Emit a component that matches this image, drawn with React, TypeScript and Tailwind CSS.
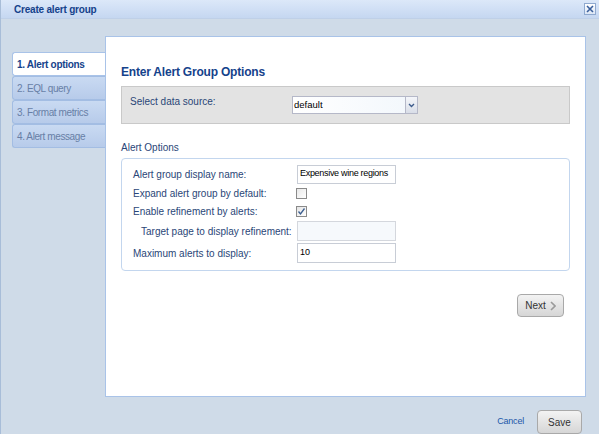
import React from "react";

const font = { fontFamily: '"Liberation Sans", Arial, sans-serif' };

function Tab({ label, active }: { label: string; active?: boolean }) {
  return active ? (
    <div className="h-[24px] bg-white border border-r-0 border-[#a9c3e8] rounded-l-[3px] flex items-center pl-[4px] text-[10px] tracking-[-0.3px] font-bold text-[#15428b]">
      {label}
    </div>
  ) : (
    <div className="h-[24px] bg-gradient-to-b from-[#c9daf2] to-[#b7cbea] border border-r-0 border-[#a3bde3] rounded-l-[3px] flex items-center pl-[4px] text-[10px] tracking-[-0.4px] text-[#687fa6] -mt-px">
      {label}
    </div>
  );
}

function Row({ label, children, indent, h, mt }: { label: string; children: React.ReactNode; indent?: boolean; h: string; mt?: string }) {
  return (
    <div className={`flex items-center ${h} ${mt ?? ""}`}>
      <div className={`w-[175px] text-[10px] whitespace-nowrap text-[#2a4677] ${indent ? "pl-[19px]" : "pl-[11px]"}`}>{label}</div>
      {children}
    </div>
  );
}

export default function App() {
  return (
    <div className="w-[599px] h-[434px] bg-[#cfdbe8] flex flex-col overflow-hidden border-l border-[#a8bdd8]" style={font}>
      <div className="h-[20px] bg-gradient-to-b from-[#dce8f9] to-[#c5d7f1] flex items-center justify-between pl-[13px] pr-[3px] border-b border-[#bfd0e8]">
        <span className="text-[10px] tracking-[-0.2px] font-bold text-[#15428b]">Create alert group</span>
        <div className="w-[12px] h-[12px] border border-[#8fa9cf] bg-gradient-to-b from-white to-[#dbe6f5] flex items-center justify-center">
          <svg width="8" height="8" viewBox="0 0 8 8">
            <path d="M1 1 L7 7 M7 1 L1 7" stroke="#3a5f9c" strokeWidth="1.6" />
          </svg>
        </div>
      </div>
      <div className="flex pt-[17px]">
        <div className="w-[104px] pl-[11px] pt-[16px] flex flex-col">
          <Tab label="1. Alert options" active />
          <div className="h-px" />
          <Tab label="2. EQL query" />
          <div className="h-px" />
          <Tab label="3. Format metrics" />
          <div className="h-px" />
          <Tab label="4. Alert message" />
        </div>
        <div className="w-[481px] h-[361px] bg-white border border-[#a9c3e8] pl-[15px] pr-[15px] flex flex-col">
          <div className="mt-[27px] text-[12px] tracking-[-0.2px] font-bold text-[#15428b] leading-[16px]">Enter Alert Group Options</div>
          <div className="mt-[6px] h-[38px] bg-[#e3e3e3] border border-[#c9c9c9] flex items-center">
            <span className="pl-[8px] w-[170px] text-[10px] text-[#2a4677] -mt-[8px]">Select data source:</span>
            <div className="h-[18px] w-[126px] border border-[#b5b8c8] bg-gradient-to-r from-white to-[#f2f7fc] flex items-center">
              <span className="flex-1 pl-[1px] text-[9.5px] text-black">default</span>
              <div className="w-[12px] h-full border-l border-[#b5b8c8] bg-gradient-to-b from-[#f4f6fa] to-[#d9dee8] flex items-center justify-center">
                <svg width="7" height="5" viewBox="0 0 7 5">
                  <path d="M1 1 L3.5 3.5 L6 1" stroke="#3d5c8c" strokeWidth="1.4" fill="none" />
                </svg>
              </div>
            </div>
          </div>
          <div className="mt-[17px] text-[10px] text-[#2a4677] leading-[13px]">Alert Options</div>
          <div className="mt-[4px] h-[113px] border border-[#c3d6ee] rounded-[4px] flex flex-col pt-[5px]">
            <Row label="Alert group display name:" h="h-[20px]">
              <div className="h-[19px] w-[99px] border border-[#c8cdd6] bg-white flex items-center pl-[2px] text-[9px] tracking-[-0.3px] text-black whitespace-nowrap overflow-hidden">
                Expensive wine regions
              </div>
            </Row>
            <Row label="Expand alert group by default:" h="h-[19px]">
              <div className="w-[11px] h-[11px] border border-[#8a8a8a] bg-gradient-to-br from-[#e8e8e8] to-white -ml-[1px]" />
            </Row>
            <Row label="Enable refinement by alerts:" h="h-[17px]">
              <div className="w-[11px] h-[11px] border border-[#8a8a8a] bg-gradient-to-br from-[#e4e4e4] to-white -ml-[1px] flex items-center justify-center">
                <svg width="9" height="9" viewBox="0 0 9 9">
                  <path d="M1.5 4.5 L3.5 7 L7.5 1.5" stroke="#3b5e90" strokeWidth="1.3" fill="none" />
                </svg>
              </div>
            </Row>
            <Row label="Target page to display refinement:" indent h="h-[20px]" mt="mt-[1px]">
              <div className="h-[20px] w-[99px] border border-[#d4d7dd] bg-[#f6f9fc]" />
            </Row>
            <Row label="Maximum alerts to display:" h="h-[20px]" mt="mt-[2px]">
              <div className="h-[20px] w-[99px] border border-[#c8cdd6] bg-white flex items-center pl-[2px] text-[9px] text-black">10</div>
            </Row>
          </div>
          <div className="mt-[23px] flex justify-end pr-[6px]">
            <div className="h-[23px] w-[47px] rounded-[4px] border border-[#a9a9a9] bg-gradient-to-b from-[#f3f3f3] to-[#d6d6d6] flex items-center justify-center gap-[4px]">
              <span className="text-[10px] text-[#333]">Next</span>
              <svg width="6" height="10" viewBox="0 0 6 10">
                <path d="M1 1 L5 5 L1 9" stroke="#9a9a9a" strokeWidth="1.6" fill="none" />
              </svg>
            </div>
          </div>
        </div>
      </div>
      <div className="flex items-center justify-end pr-[17px] pt-[13px]">
        <span className="text-[9px] tracking-[-0.2px] text-[#2057a8] mr-[13px]">Cancel</span>
        <div className="h-[24px] w-[45px] rounded-[4px] border border-[#a9a9a9] bg-gradient-to-b from-[#f3f3f3] to-[#d6d6d6] flex items-center justify-center">
          <span className="text-[10px] text-[#333]">Save</span>
        </div>
      </div>
    </div>
  );
}
